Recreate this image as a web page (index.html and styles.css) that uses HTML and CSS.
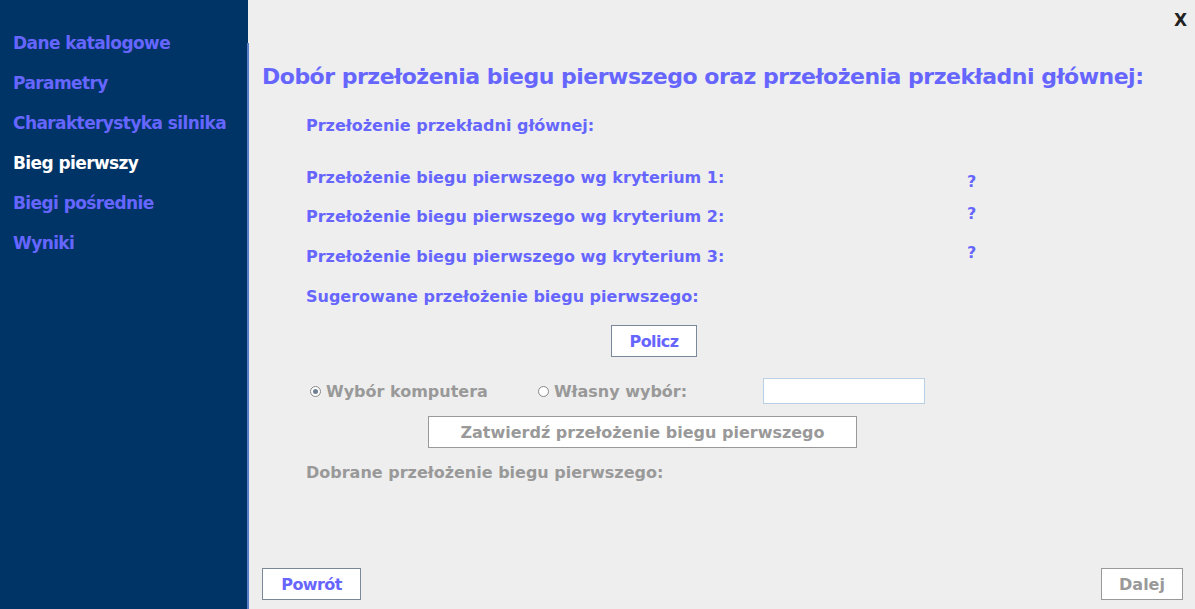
FILE: index.html
```html
<!DOCTYPE html>
<html lang="pl">
<head>
<meta charset="utf-8">
<title>Bieg pierwszy</title>
<link rel="stylesheet" href="styles.css">
</head>
<body>
<div class="app">
  <nav class="sidebar">
    <a class="nav-item">Dane katalogowe</a>
    <a class="nav-item">Parametry</a>
    <a class="nav-item">Charakterystyka silnika</a>
    <a class="nav-item active">Bieg pierwszy</a>
    <a class="nav-item">Biegi pośrednie</a>
    <a class="nav-item">Wyniki</a>
  </nav>
  <main class="main">
    <div class="topbar"><span class="close">X</span></div>
    <h1 class="title">Dobór przełożenia biegu pierwszego oraz przełożenia przekładni głównej:</h1>
    <section class="form">
      <div class="row r-main">Przełożenie przekładni głównej:</div>
      <div class="row r-k1"><span class="label">Przełożenie biegu pierwszego wg kryterium 1:</span><span class="q q1">?</span></div>
      <div class="row r-k2"><span class="label">Przełożenie biegu pierwszego wg kryterium 2:</span><span class="q q2">?</span></div>
      <div class="row r-k3"><span class="label">Przełożenie biegu pierwszego wg kryterium 3:</span><span class="q q3">?</span></div>
      <div class="row r-sug">Sugerowane przełożenie biegu pierwszego:</div>
      <div class="center-row policz-row"><button class="btn btn-blue policz">Policz</button></div>
      <div class="radio-row">
        <label class="radio"><span class="dot checked"></span>Wybór komputera</label>
        <label class="radio radio2"><span class="dot"></span>Własny wybór:</label>
        <input class="own-input" type="text">
      </div>
      <div class="center-row confirm-row"><button class="btn btn-grey confirm">Zatwierdź przełożenie biegu pierwszego</button></div>
      <div class="row grey r-chosen">Dobrane przełożenie biegu pierwszego:</div>
    </section>
    <footer class="footer">
      <button class="btn btn-blue back">Powrót</button>
      <button class="btn btn-grey next">Dalej</button>
    </footer>
  </main>
</div>
</body>
</html>
```
FILE: styles.css
```css
* { box-sizing: border-box; }
html, body { margin: 0; padding: 0; }
body {
  width: 1195px;
  height: 609px;
  overflow: hidden;
  background: #eeeeee;
  font-family: "DejaVu Sans", Tahoma, sans-serif;
  font-weight: bold;
}
.app { display: flex; height: 609px; }
.sidebar {
  width: 248px;
  flex: none;
  background: #003366;
  display: flex;
  flex-direction: column;
  padding-top: 31px;
  padding-left: 13px;
  position: relative;
}
.sidebar::after {
  content: "";
  position: absolute;
  right: -1px;
  top: 43px;
  bottom: 0;
  width: 2px;
  background: #5b7fc7;
}
.nav-item {
  display: block;
  height: 40px;
  line-height: 24px;
  font-size: 17px;
  color: #6666ff;
  letter-spacing: -0.6px;
}
.nav-item.active { color: #ffffff; }
.main {
  flex: 1;
  display: flex;
  flex-direction: column;
  padding: 0 12px 9px 14px;
}
.topbar { display: flex; justify-content: flex-end; height: 42px; padding-top: 10px; }
.close { font-size: 17px; color: #222; line-height: 20px; margin-right: -4px; }
.title {
  margin: 20px 0 0 0;
  font-size: 22px;
  line-height: 30px;
  color: #6666ff;
  letter-spacing: -0.5px;
}
.form { padding-left: 44px; display: flex; flex-direction: column; }
.row {
  display: flex;
  align-items: center;
  font-size: 16px;
  color: #6666ff;
  letter-spacing: 0;
  height: 24px;
}
.r-main { margin-top: 21px; }
.r-k1 { margin-top: 28px; }
.r-k2 { margin-top: 15px; }
.r-k3 { margin-top: 16px; }
.r-sug { margin-top: 16px; }
.label { width: 661px; flex: none; }
.q { font-size: 16px; position: relative; }
.q1 { top: 4px; }
.q2 { top: -3px; }
.q3 { top: -4px; }
.grey { color: #999999; }
.center-row { display: flex; padding-left: 305px; }
.btn {
  font-family: inherit;
  font-weight: bold;
  background: #ffffff;
  font-size: 16px;
  padding: 0;
  height: 32px;
}
.btn-blue { color: #6666ff; border: 1px solid #7a8899; letter-spacing: -0.6px; }
.btn-grey { color: #999999; border: 1px solid #999999; }
.policz-row { margin-top: 17px; }
.policz { width: 86px; }
.radio-row {
  display: flex;
  align-items: center;
  margin-top: 20px;
  height: 28px;
  color: #999999;
  font-size: 16px;
}
.radio { display: flex; align-items: center; }
.radio:first-child { margin-left: 4px; }
.radio2 { margin-left: 50px; }
.dot {
  width: 11px; height: 11px;
  border: 1px solid #888;
  border-radius: 50%;
  margin-right: 5px;
  background: #fff;
  display: inline-flex;
  align-items: center;
  justify-content: center;
}
.dot.checked::after {
  content: "";
  width: 5px; height: 5px;
  border-radius: 50%;
  background: #6e7f91;
}
.own-input {
  margin-left: 76px;
  width: 162px;
  height: 26px;
  border: 1px solid #b8cfe5;
  background: #fff;
  padding: 0;
}
.confirm-row { margin-top: 11px; padding-left: 122px; }
.confirm { width: 429px; }
.r-chosen { margin-top: 12px; }
.footer {
  margin-top: auto;
  display: flex;
  justify-content: space-between;
}
.back { width: 99px; }
.next { width: 82px; }
```
